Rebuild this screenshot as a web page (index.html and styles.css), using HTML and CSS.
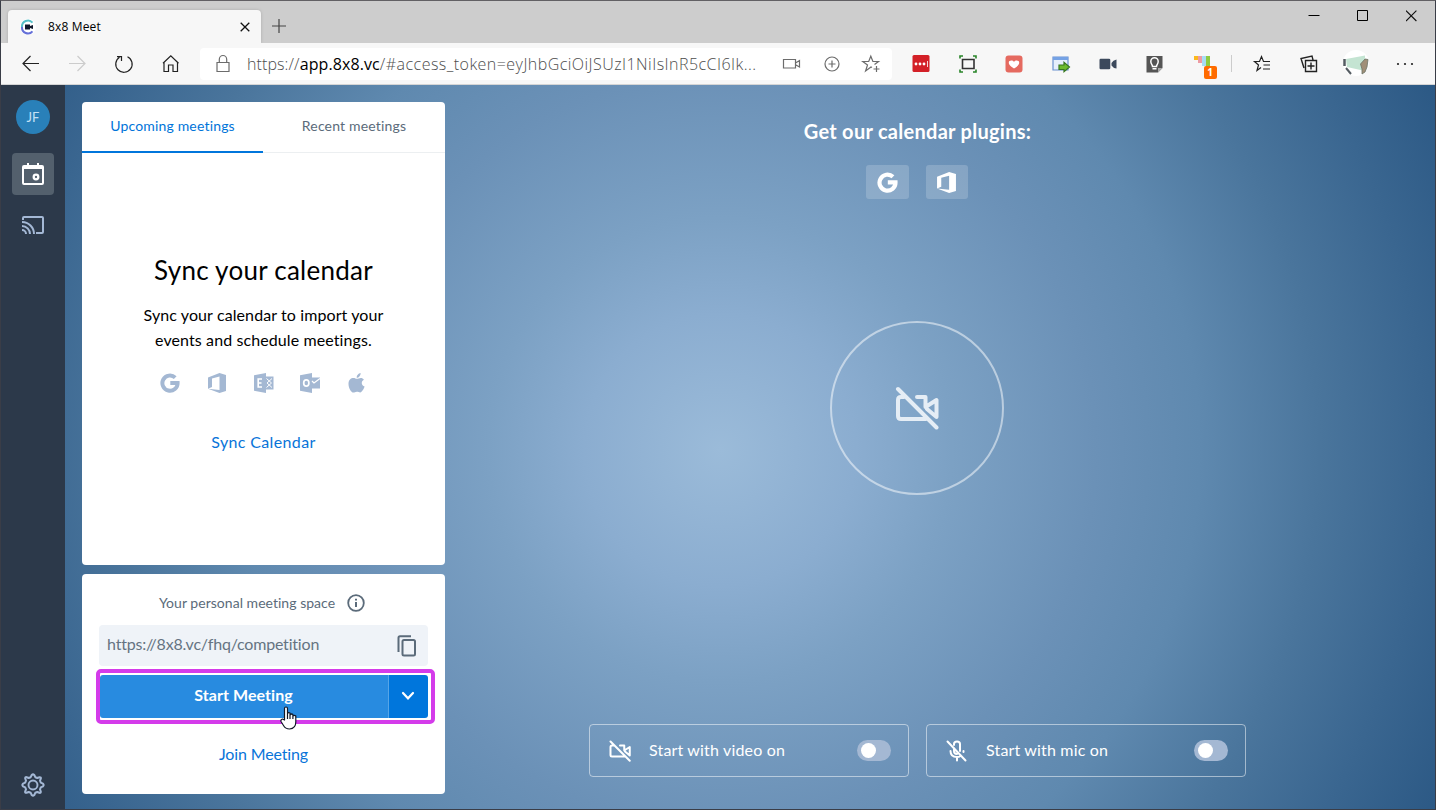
FILE: index.html
```html
<!DOCTYPE html>
<html lang="en">
<head>
<meta charset="utf-8">
<title>8x8 Meet</title>
<link rel="stylesheet" href="styles.css">
</head>
<body>
<svg width="0" height="0" class="defs" aria-hidden="true">
  <defs>
    <symbol id="google" viewBox="0 0 20 20"><path d="M15.2 4.600A7.600 7.600 0 1 0 17.600 9.900H10.300" fill="none" stroke="currentColor" stroke-width="4"/></symbol>
    <symbol id="office" viewBox="0 0 20 20"><path fill="currentColor" fill-rule="evenodd" d="M1 4.500 12.500 0 19 2V18L12.500 20 1 15.700 12.500 17V3.500L5 5.500V14L1 15.700Z"/></symbol>
    <symbol id="videooff" viewBox="0 0 44 44"><path fill="none" stroke="currentColor" stroke-width="4" stroke-linecap="round" stroke-linejoin="round" d="M3 3 41.500 41.500M9 11H6Q3 11 3 14V30Q3 33 6 33H31M22 11H30.500V21L41.500 14V31L32 23"/></symbol>
  </defs>
</svg>
<div class="window">
  <header class="titlebar">
    <div class="tab">
      <svg class="favicon" viewBox="0 0 16 16"><circle cx="8" cy="8" r="8" fill="#fff"/><path d="M12.500 3.600A6 6 0 0 0 2 8" fill="none" stroke="#55bfc7" stroke-width="2"/><path d="M2 8A6 6 0 0 0 12.500 12.400" fill="none" stroke="#6570d8" stroke-width="2"/><path fill="#10182b" d="M5 5.500H10V7L13 6V10L10 9V10.500H5Z"/></svg>
      <span class="tabname">8x8 Meet</span>
      <svg class="close" viewBox="0 0 10 10"><path d="M.7.7 9.300 9.300M9.300.7.7 9.300" stroke="#111" stroke-width="1.300"/></svg>
    </div>
    <svg class="newtab" viewBox="0 0 14 14"><path d="M7 0V14M0 7H14" stroke="#444" stroke-width="1.200"/></svg>
    <div class="winctl">
      <svg viewBox="0 0 12 12"><path d="M.5 5.500H11.500" stroke="#000"/></svg>
      <svg viewBox="0 0 12 12"><path d="M.5 .5H10.500V10.500H.5Z" fill="none" stroke="#000"/></svg>
      <svg viewBox="0 0 12 12"><path d="M0 .6 10.400 11M10.400 .6 0 11" stroke="#111" stroke-width="1.100"/></svg>
    </div>
  </header>
  <div class="toolbar">
    <div class="slots nav">
      <svg viewBox="0 0 20 20"><path d="M18 9.500H2M9.500 2 2 9.500l7.500 7.500"/></svg>
      <svg class="dim" viewBox="0 0 20 20"><path d="M2 9.500H18M10.500 2 18 9.500l-7.500 7.500"/></svg>
      <svg viewBox="0 0 20 20"><path d="M5.500 3.200A8.200 8.200 0 1 0 13.500 2.700M3 2.700H7.500V7"/></svg>
      <svg viewBox="0 0 20 20"><path d="M3 8.500V17.500H7.500V11H12V17.500H16.500V8.500M2 9.300 9.800 1.800 17.500 9.300"/></svg>
    </div>
    <div class="address">
      <svg class="lock" viewBox="0 0 20 20"><path d="M4 8.500H16V17.500H4ZM6.300 8.500V5.500A3.700 4 0 0 1 13.700 5.500V8.500"/></svg>
      <span class="url">https://<b>app.8x8.vc</b><span class="query">/#access_token=eyJhbGciOiJSUzI1NiIsInR5cCI6Ik...</span></span>
      <div class="addr-tools">
        <svg viewBox="0 0 20 20"><path d="M1.500 5.500H13.500V14H1.500ZM13.500 9 17.500 6.500V13L13.500 10.800"/></svg>
        <svg viewBox="0 0 20 20"><circle cx="10" cy="10" r="7"/><path d="M10 6.500V13.500M6.500 10H13.500"/></svg>
        <svg viewBox="0 0 20 20"><path d="M11 13.500 10 12.900 4.600 17 6.500 11 1.800 7.500H7.700L9.800 2.200 11.900 7.500H17.500L13.500 10.500M15.500 12V18M12.500 15H18.500"/></svg>
      </div>
    </div>
    <div class="slots ext">
      <svg viewBox="0 0 20 20"><rect x="1.500" y="1" width="17" height="17" rx="1.500" fill="#d32027" stroke="none"/><g fill="#fff" stroke="none"><circle cx="5" cy="10" r="1.400"/><circle cx="9" cy="10" r="1.400"/><circle cx="13" cy="10" r="1.400"/><path d="M16 7H16.800V13H16Z"/></g></svg>
      <svg viewBox="0 0 20 20"><path d="M4.500 5.500H16V14.500H4.500Z" stroke="#333" stroke-width="1.600"/><path d="M2 4.500V2H5M15 2H18V4.500M18 15.500V18H15M5 18H2V15.500" stroke="#288528" stroke-width="1.600"/></svg>
      <svg viewBox="0 0 20 20"><rect x="1.500" y="1.500" width="17" height="17" rx="3" fill="#e56a60" stroke="none"/><path d="M10 14.500C6 12 4.800 10.500 4.800 8.500 4.800 6.200 8.700 5.800 10 7.900 11.300 5.800 15.200 6.200 15.200 8.500 15.200 10.500 14 12 10 14.500Z" fill="#fff" stroke="none"/></svg>
      <svg viewBox="0 0 20 20"><path d="M2 3H17V16H2Z" fill="#e6effc" stroke="#6b91cf"/><path d="M2 3H17V6H2Z" fill="#75a2e5" stroke="none"/><path d="M8 11H13V8.300L18.500 13 13 17.700V15.500H8Z" fill="#6dbb2d" stroke="#397820"/></svg>
      <svg viewBox="0 0 20 20"><path d="M1.500 6Q1.500 4.800 2.700 4.800H11Q12.300 4.800 12.300 6V14Q12.300 15.200 11 15.200H2.700Q1.500 15.200 1.500 14ZM13.500 9Q15 6 18.500 5.500V14.500Q15 14 13.500 11.500Z" fill="#3c495c" stroke="none"/></svg>
      <svg viewBox="0 0 20 20"><path d="M2.500 2H18.500V14L14 18.500H2.500Z" fill="#555" stroke="none"/><path d="M14 18.500V14H18.500Z" fill="#aaa" stroke="none"/><path d="M8.500 12.500C8.500 10.500 6.800 10 6.800 7.500A3.700 3.700 0 0 1 14.200 7.500C14.200 10 12.500 10.500 12.500 12.500ZM8.500 14.800H12.500" stroke="#fff" stroke-width="1.500"/></svg>
      <div class="color-ext"><svg viewBox="0 0 20 20"><g stroke="none"><path d="M3 2H7V6H3Z" fill="#fbb91e"/><path d="M7 2H11V9H7Z" fill="#ed9ba3"/><path d="M11 2H15V12H11Z" fill="#a7dcf5"/><path d="M15 2H19V12H15Z" fill="#8fca42"/></g></svg><span class="badge">1</span></div>
    </div>
    <div class="divider"></div>
    <div class="slots tools">
      <svg viewBox="0 0 20 20"><path d="M9 13.500 5 16.500 6.500 11 2.500 7.500H7.500L9.500 2.500 11.500 7.500H18M11.500 11H18M11 15H18"/></svg>
      <svg viewBox="0 0 20 20"><path d="M6.500 6.500H17.500V17.500H6.500ZM12 8.500V15.500M8.500 12H15.500M5 14 2 4.500 13 2 14 6" stroke-width="1.400"/></svg>
      <svg class="avatar" viewBox="0 0 26 26"><circle cx="13" cy="13" r="13" fill="#fff" stroke="none"/><path d="M3 9 22 5.500V21L4 17Z" fill="#c4e4d2" stroke="none"/><path d="M1.500 9V16" stroke="#555c62" stroke-width="2.500"/><path d="M3 18 8 24" stroke="#555c62" stroke-width="2"/><path d="M19 24V19L17.500 14 22 9 25 9.500 24 17 22 22Z" fill="#a08f78" stroke="#6b7265" stroke-width=".8"/></svg>
      <svg viewBox="0 0 20 20"><g fill="#222" stroke="none"><circle cx="3" cy="10" r="1.100"/><circle cx="10" cy="10" r="1.100"/><circle cx="17" cy="10" r="1.100"/></g></svg>
    </div>
  </div>
  <div class="app">
    <aside class="sidebar">
      <div class="initials">JF</div>
      <div class="side-active"><svg viewBox="0 0 24 24"><path fill="none" stroke="#fff" stroke-width="2" d="M3 4H21Q22 4 22 5V21Q22 22 21 22H3Q2 22 2 21V5Q2 4 3 4Z"/><path fill="#fff" d="M2 4H22V7H2ZM6 1H8V5H6ZM16 1H18V5H16Z"/><circle cx="15" cy="15" r="2.300" fill="none" stroke="#fff" stroke-width="2.300"/></svg></div>
      <svg class="cast" viewBox="0 0 24 24"><path fill="none" stroke="#a4b8d5" stroke-width="2" d="M2 7V5Q2 4 3 4H21Q22 4 22 5V19Q22 20 21 20H15M1 9A12 12 0 0 1 13 21M1 13A8 8 0 0 1 9 21M1 17A4 4 0 0 1 5 21"/></svg>
      <svg class="gear" viewBox="0 0 24 24"><path fill="none" stroke="#a4b8d5" stroke-width="2" stroke-linejoin="round" d="M10.700 2Q12 .8 13.300 2L14.300 4.200 16.300 5 18.500 4.200Q20.200 4 19.800 5.700L19 7.700 19.800 9.700 22 10.700Q23.200 12 22 13.300L19.800 14.300 19 16.300 19.800 18.500Q20 20.200 18.300 19.800L16.300 19 14.300 19.800 13.300 22Q12 23.200 10.700 22L9.700 19.800 7.700 19 5.500 19.800Q3.800 20 4.200 18.300L5 16.300 4.200 14.300 2 13.300Q.8 12 2 10.700L4.200 9.700 5 7.700 4.200 5.500Q4 3.800 5.700 4.200L7.700 5 9.700 4.200Z"/><circle cx="12" cy="12" r="4.500" fill="none" stroke="#a4b8d5" stroke-width="1.900"/></svg>
    </aside>
    <div class="panels">
      <section class="card calendar">
        <div class="tabs"><div class="active"><span>Upcoming meetings</span></div><div><span>Recent meetings</span></div></div>
        <h1>Sync your calendar</h1>
        <p>Sync your calendar to import your<br>events and schedule meetings.</p>
        <div class="providers">
          <svg viewBox="0 0 20 20"><use href="#google"/></svg>
          <svg viewBox="0 0 20 20"><use href="#office"/></svg>
          <svg viewBox="0 0 20 20"><path fill="currentColor" d="M0 2.300 12 0V20L0 17.700ZM12 3.500H19.500V16.500H12Z"/><path fill="none" stroke="#fff" stroke-width="1.600" d="M8 6H4.200V14H8M4.200 10H7.500"/><path fill="none" stroke="#fff" stroke-width="1" d="M12.500 5.500 17.500 10 12.500 14.500M18 5.500 13 10 18 14.500"/></svg>
          <svg viewBox="0 0 20 20"><path fill="currentColor" d="M0 2.300 12 0V20L0 17.700ZM12 4.500H20V15.500H12Z"/><ellipse cx="6.300" cy="10" rx="2.600" ry="3.200" fill="none" stroke="#fff" stroke-width="1.700"/><path fill="none" stroke="#fff" stroke-width="1.200" d="M12 8 14 10 20 5.500"/></svg>
          <svg viewBox="0 0 20 20"><path fill="currentColor" d="M13.600 0C13.800 2.500 11.900 4.800 9.700 4.800 9.500 2.500 11.500.3 13.600 0ZM16.900 6.700C13.800 8.500 14.200 12 17.600 13.600 16.700 16 15 19.400 13.200 19.400 11.900 19.400 11.400 18.700 9.800 18.700S7.600 19.500 6.400 19.500C4.100 19.500 1.500 15 1.500 10.900 1.500 7 3.900 5 6.400 5 8 5 8.900 5.800 10 5.800 11 5.800 12 4.900 13.800 4.900 15 4.900 16.200 5.500 16.900 6.700Z"/></svg>
        </div>
        <a class="sync">Sync Calendar</a>
      </section>
      <section class="card space">
        <div class="space-label"><span>Your personal meeting space</span><svg viewBox="0 0 18 18"><circle cx="9" cy="9" r="7.800" fill="none" stroke="#5b6b7a" stroke-width="1.800"/><path d="M9 8V13M9 4.800V6.500" stroke="#5b6b7a" stroke-width="2"/></svg></div>
        <div class="link-field"><span>https://8x8.vc/fhq/competition</span><svg viewBox="0 0 20 22"><path fill="none" stroke="#5b6b7a" stroke-width="2" stroke-linejoin="round" d="M14 1.200H3Q1.500 1.200 1.500 2.700V17M7 5H16.500Q18 5 18 6.500V19Q18 20.500 16.500 20.500H7Q5.500 20.500 5.500 19V6.500Q5.500 5 7 5Z"/></svg></div>
        <div class="start">
          <button class="go"><span>Start Meeting</span></button>
          <button class="more"><svg viewBox="0 0 14 10"><path d="M2 2 7 7.300 12 2" fill="none" stroke="#fff" stroke-width="2.200" stroke-linecap="round"/></svg></button>
          <svg class="cursor" viewBox="0 0 17 24"><path fill="#fff" stroke="#111827" stroke-width="1.200" stroke-linejoin="round" d="M4.500 14V2.500Q4.500 1 6 1T7.500 2.500V7.500Q8.500 6 10 7V9Q11.500 7.300 12.900 8.500V10Q14.500 8.700 15.800 10V16Q15.800 22.500 9.500 23 5.500 23 3.500 19.500L1 15.500Q.5 13.500 2.500 13ZM7.500 7.500V13M10 8.500V13M12.900 9.500V13"/></svg>
        </div>
        <a class="join">Join Meeting</a>
      </section>
    </div>
    <main class="stage">
      <h2>Get our calendar plugins:</h2>
      <div class="plugins"><button><svg viewBox="0 0 20 20"><use href="#google"/></svg></button><button><svg viewBox="0 0 20 20"><use href="#office"/></svg></button></div>
      <div class="preview"><svg viewBox="0 0 44 44"><use href="#videooff"/></svg></div>
      <div class="options">
        <div class="option"><svg viewBox="0 0 44 44"><use href="#videooff"/></svg><span>Start with video on</span><i class="switch"></i></div>
        <div class="option"><svg viewBox="0 0 22 22"><path fill="none" stroke="#fff" stroke-width="2" stroke-linecap="round" d="M1.500 1.500 19.500 20.500M8 5V4Q8 1.500 11 1.500T14 4V11M8 8V11Q8 14 11 14M4.500 11Q4.500 17 11 17 13 17 14.500 16M17.500 11V12M11 17V20.500"/></svg><span>Start with mic on</span><i class="switch"></i></div>
      </div>
    </main>
  </div>
</div>
</body>
</html>
```
FILE: styles.css
```css
* { box-sizing: border-box; }
body { margin: 0; font-family: "Lato", "Open Sans", sans-serif; font-variant-ligatures: none; }
svg { display: block; flex: none; }
.defs { position: absolute; }
button { border: 0; padding: 0; font: inherit; color: #fff; display: flex; align-items: center; justify-content: center; }
span { white-space: nowrap; }
.window { width: 1436px; height: 810px; overflow: hidden; border: 1px solid #3a3d47; border-top-color: #626064; display: flex; flex-direction: column; }
.titlebar { height: 42px; flex: none; background: #cdcdcd; display: flex; align-items: flex-start; padding-left: 7px; }
.tab { width: 253px; height: 33px; margin-top: 9px; background: #f7f7f7; border-radius: 4px 4px 0 0; display: flex; align-items: center; padding: 0 11px 0 12px; box-shadow: 0 0 3px #aaa; }
.favicon { width: 16px; height: 16px; }
.tabname { font: 12px "Open Sans", sans-serif; color: #000; margin-left: 12px; flex: 1; letter-spacing: .15px; }
.close { width: 10px; height: 10px; }
.newtab { width: 14px; height: 14px; margin: 18px 0 0 11px; }
.winctl { margin-left: auto; display: flex; gap: 37px; padding: 9px 17px 0 0; }
.winctl svg { width: 12px; height: 12px; }
.toolbar { height: 42px; flex: none; background: #f7f7f7; display: flex; align-items: center; padding-left: 6.500px; border-bottom: 1px solid #d5d5d5; z-index: 1; }
.slots { display: flex; }
.slots svg { width: 20px; height: 20px; margin: 0 13.300px; fill: none; stroke: #222; stroke-width: 1.200; }
.nav { width: 192.500px; }
.slots .dim { stroke: #ccc; }
.address { width: 692px; height: 32px; background: #fff; border-radius: 4px; display: flex; align-items: center; padding: 0 11px 0 13px; flex: none; }
.address svg { width: 20px; height: 20px; fill: none; stroke: #6c6c6c; stroke-width: 1.200; }
.url { font: 300 16px "Open Sans", sans-serif; color: #4d4d4d; margin-left: 14px; flex: 1; letter-spacing: .1px; font-variant-ligatures: none; }
.url b { font-weight: 400; color: #000; }
.query { letter-spacing: .46px; }
.addr-tools { display: flex; gap: 19.500px; }
.ext { margin-left: 6px; }
.color-ext { position: relative; }
.badge { position: absolute; left: 26px; top: 12px; width: 13px; height: 13px; border-radius: 2px; background: #ff6b00; color: #fff; font: bold 10px/13px "Open Sans", sans-serif; text-align: center; }
.divider { width: 1px; height: 17px; background: #ccc; margin: 0 7px; }
.slots .avatar { width: 26px; height: 26px; margin: -4px 9.800px -2px 10.800px; }
.tools > svg:last-child { margin-left: 16px; }
.app { flex: 1; display: flex; background: radial-gradient(circle 800px at 719px 365px, #9bbbd9 0, #8badd0 17%, #7ca1c4 29%, #6b91b7 47%, #5f89af 60%, #4a759c 75%, #3a6690 88%, #2c5985 100%); min-height: 0; }
.sidebar { width: 64px; background: #2c394a; flex: none; display: flex; flex-direction: column; align-items: center; padding: 15px 0 12px; }
.initials { width: 34px; height: 34px; border-radius: 50%; background: #2980b9; color: #c5e1f5; font-size: 13px; line-height: 34px; text-align: center; }
.side-active { width: 42px; height: 42px; border-radius: 4px; background: #53606d; margin-top: 19px; display: flex; align-items: center; justify-content: center; }
.side-active svg, .cast, .gear { width: 24px; height: 24px; }
.cast { margin-top: 18px; }
.gear { margin-top: auto; }
.panels { width: 363px; margin: 17px 0 0 17px; display: flex; flex-direction: column; gap: 9px; flex: none; }
.card { background: #fff; border-radius: 4px; display: flex; flex-direction: column; align-items: center; }
.calendar { height: 463px; }
.tabs { width: 100%; height: 51px; display: flex; font-size: 14px; letter-spacing: .17px; color: #5b6b7a; }
.tabs div { flex: 1; display: flex; align-items: center; justify-content: center; border-bottom: 1px solid #eceff1; padding-bottom: 3px; }
.tabs .active { flex: 0 0 181px; color: #0074d9; border-bottom: 2px solid #0076dc; padding-bottom: 2px; }
h1 { font-size: 26px; font-weight: 400; line-height: 34px; letter-spacing: .25px; margin: 100px 0 15px; }
p { margin: 0; font-size: 16px; line-height: 25px; letter-spacing: .1px; text-align: center; }
.providers { color: #a4b8d3; display: flex; gap: 26.700px; margin-top: 21px; }
.providers svg { width: 20px; height: 20px; }
.sync, .join { color: #0874d9; font-size: 16px; line-height: 22px; white-space: nowrap; }
.sync { margin-top: 38px; letter-spacing: .35px; }
.space { height: 220px; padding: 17px 17px 0; }
.space-label { height: 24px; display: flex; align-items: center; gap: 12px; font-size: 14px; letter-spacing: .03px; color: #5b6b7a; padding-right: 3px; }
.space-label span { padding-bottom: 1px; }
.space-label svg { width: 18px; height: 18px; }
.link-field { width: 100%; height: 41px; margin-top: 10px; background: #eff3f8; border-radius: 4px; display: flex; align-items: center; justify-content: space-between; padding: 0 11px 2px 8px; color: #657382; font-size: 16px; letter-spacing: -.19px; }
.link-field span { padding-bottom: 2px; }
.link-field svg { width: 20px; height: 22px; margin-top: 2px; }
.start { position: relative; width: 339px; height: 55px; margin: 3px 0 0 3px; border: 4px solid #d43bea; border-radius: 5px; padding: 2px 3px 1px 0; display: flex; flex: none; }
.start button { height: 43px; }
.go { width: 288px; background: #288be0; border-radius: 3px 0 0 3px; font-weight: 700; font-size: 16px; letter-spacing: .08px; }
.start .go { padding: 0 0 4px; }
.more { flex: 1; background: #0076dc; border-left: 1px solid #55a5e8; border-radius: 0 3px 3px 0; }
.start .more { padding: 0 1px 1px 0; }
.more svg { width: 14px; height: 10px; }
.cursor { position: absolute; left: 180px; top: 33px; width: 17px; height: 24px; }
.join { margin-top: 19px; letter-spacing: -.15px; }
.stage { margin-left: 143px; width: 657px; display: flex; flex-direction: column; align-items: center; color: #fff; }
h2 { font-size: 20px; line-height: 26px; font-weight: 700; letter-spacing: .28px; margin: 33px 0 21px 2px; }
.plugins { display: flex; gap: 17px; }
.plugins button { width: 43px; height: 34px; border-radius: 3px; background: rgba(255,255,255,.18); }
.plugins button + button { width: 42px; }
.plugins svg { width: 21px; height: 21px; }
.preview { width: 174px; height: 174px; margin-top: 122px; border: 2px solid rgba(255,255,255,.5); border-radius: 50%; display: flex; align-items: center; justify-content: center; color: #e5edf5; }
.preview svg { width: 44px; height: 44px; }
.options { display: flex; gap: 17px; margin-top: 229px; margin-left: 1px; }
.option { width: 320px; height: 53px; border: 1px solid rgba(255,255,255,.5); border-radius: 4px; display: flex; align-items: center; padding: 0 17px 0 19px; font-size: 16px; letter-spacing: .17px; }
.option span { padding-bottom: 3px; }
.option svg { width: 22px; height: 22px; margin-right: 18.500px; }
.switch { margin-left: auto; width: 34px; height: 21px; border-radius: 11px; background: #a4b8d3; display: flex; align-items: center; padding-left: 4px; }
.switch::before { content: ""; width: 15px; height: 15px; border-radius: 50%; background: #fff; }
```
